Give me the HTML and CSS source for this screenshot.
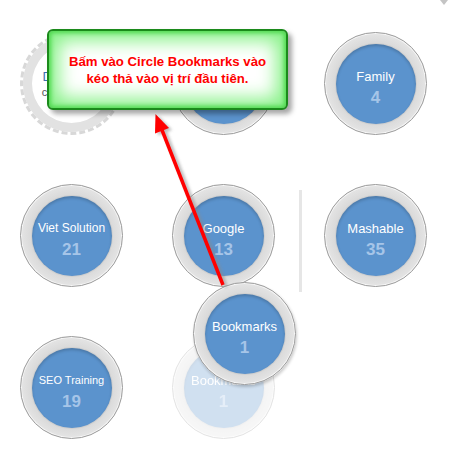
FILE: index.html
```html
<!DOCTYPE html>
<html>
<head>
<meta charset="utf-8">
<link rel="stylesheet" href="styles.css">
</head>
<body>
<div class="page">
  <div class="board">
    <div class="dropzone">
      <span class="drop-title">Drop here</span>
      <span class="drop-sub">create circle</span>
    </div>
    <div class="circle"><div class="inner"></div></div>
    <div class="circle"><div class="inner"><span class="label">Family</span><span class="count">4</span></div></div>

    <div class="circle"><div class="inner"><span class="label small">Viet Solution</span><span class="count">21</span></div></div>
    <div class="circle"><div class="inner"><span class="label">Google</span><span class="count">13</span></div></div>
    <div class="circle with-divider"><div class="inner"><span class="label">Mashable</span><span class="count">35</span></div></div>

    <div class="circle"><div class="inner"><span class="label smaller">SEO Training</span><span class="count">19</span></div></div>
    <div class="circle ghost"><div class="inner"><span class="label">Bookmarks</span><span class="count">1</span></div></div>
  </div>

  <div class="circle dragging"><div class="inner"><span class="label">Bookmarks</span><span class="count">1</span></div></div>

  <svg class="arrow" width="472" height="452" viewBox="0 0 472 452">
    <defs>
      <filter id="sh" x="-20%" y="-20%" width="140%" height="140%">
        <feGaussianBlur stdDeviation="1.6"/>
      </filter>
    </defs>
    <g fill="#888" stroke="#888" opacity="0.55" filter="url(#sh)" transform="translate(3,2)">
      <line x1="223" y1="285" x2="162" y2="130" stroke-width="4"/>
      <polygon points="155.5,114 169,128 155,133.5" stroke="none"/>
    </g>
    <g fill="#ff0000" stroke="#ff0000">
      <line x1="223" y1="285" x2="162" y2="130" stroke-width="3.5"/>
      <polygon points="155.5,114 169,128 155,133.5" stroke="none"/>
    </g>
  </svg>

  <div class="tooltip">
    <p>Bấm vào Circle Bookmarks vào<br>kéo thả vào vị trí đầu tiên.</p>
  </div>

  <div class="corner-mark"></div>
</div>
</body>
</html>
```

FILE: styles.css
```css
html, body {
  margin: 0;
  padding: 0;
  background: #ffffff;
}

.page {
  position: relative;
  width: 472px;
  height: 452px;
  overflow: hidden;
  font-family: "Liberation Sans", Arial, sans-serif;
}

.board {
  display: grid;
  grid-template-columns: repeat(3, 103px);
  grid-auto-rows: 103px;
  gap: 49px;
  padding: 32px 0 0 20px;
}

.circle {
  box-sizing: border-box;
  width: 103px;
  height: 103px;
  border-radius: 50%;
  border: 1px solid #9c9c9c;
  background: radial-gradient(circle, #d8d8d8 55%, #e4e4e4 70%, #ececec 100%);
  box-shadow: inset 0 0 0 1px #f6f6f6;
  display: flex;
  align-items: center;
  justify-content: center;
}

.inner {
  width: 80px;
  height: 80px;
  border-radius: 50%;
  background: #5b93cd;
  box-shadow: 0 0 0 1px #cfcfcf, inset 0 2px 3px rgba(0, 0, 0, 0.18);
  display: flex;
  flex-direction: column;
  align-items: center;
  justify-content: center;
  gap: 4px;
  padding-top: 9px;
  box-sizing: border-box;
}

.label {
  color: #ffffff;
  font-size: 13px;
  line-height: 15px;
  white-space: nowrap;
}

.label.small {
  font-size: 12px;
}

.label.smaller {
  font-size: 11px;
}

.count {
  color: #a6c5e8;
  font-size: 17px;
  font-weight: bold;
  line-height: 19px;
}

.dropzone {
  box-sizing: border-box;
  width: 103px;
  height: 103px;
  border-radius: 50%;
  border: 3px dashed #d8d8d8;
  box-shadow: inset 0 0 0 9px #e2e2e2;
  background: #ffffff;
  display: flex;
  flex-direction: column;
  align-items: center;
  justify-content: center;
  gap: 2px;
}

.drop-title {
  color: #3b6fb0;
  font-size: 13px;
  line-height: 15px;
}

.drop-sub {
  color: #555555;
  font-size: 11px;
  line-height: 13px;
}

.with-divider {
  position: relative;
}

.with-divider::before {
  content: "";
  position: absolute;
  left: -26px;
  top: 5px;
  width: 3px;
  height: 102px;
  background: #e6e6e6;
}

.ghost {
  opacity: 0.28;
}

.dragging {
  position: absolute;
  left: 193px;
  top: 282px;
  box-shadow: inset 0 0 0 1px #f6f6f6, 1px 2px 3px rgba(0, 0, 0, 0.2);
}

.arrow {
  position: absolute;
  left: 0;
  top: 0;
  pointer-events: none;
}

.tooltip {
  position: absolute;
  left: 47px;
  top: 29px;
  box-sizing: border-box;
  width: 241px;
  height: 81px;
  border: 2px solid #1b8a1b;
  border-radius: 6px;
  background: #ffffff;
  box-shadow: inset 0 0 4px 2px #4fd84f, inset 0 0 18px 10px #8af28a, 4px 4px 5px rgba(0, 0, 0, 0.35);
  display: flex;
  align-items: center;
  justify-content: center;
}

.tooltip p {
  margin: 0;
  color: #ff0000;
  font-weight: bold;
  font-size: 13.2px;
  line-height: 17px;
  text-align: center;
}

.corner-mark {
  position: absolute;
  left: 440px;
  top: 0;
  width: 0;
  height: 0;
  border-left: 4px solid transparent;
  border-right: 4px solid transparent;
  border-top: 5px solid #c4c4c4;
}
```
